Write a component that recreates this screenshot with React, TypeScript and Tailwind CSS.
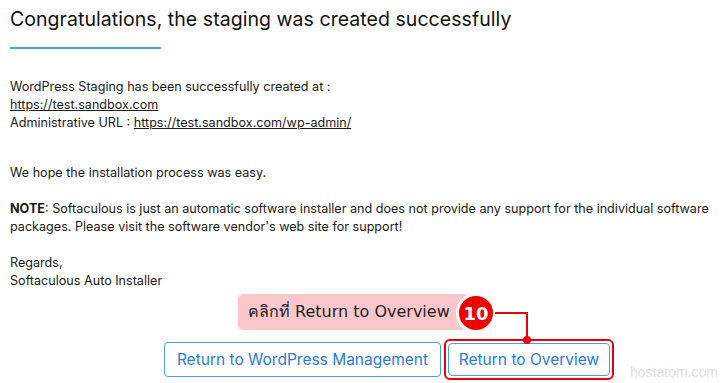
import React from "react";

export default function App() {
  return (
    <div
      className="relative w-[720px] h-[383px] overflow-hidden bg-white text-[#1a1a1a]"
      style={{ fontFamily: "Inter, 'Open Sans', sans-serif" }}
    >
      <div className="flex flex-col pl-[10px] pt-[6px]">
        <h1 className="text-[19.5px] leading-[26px] font-normal text-[#111] tracking-[0.05px]">
          Congratulations, the staging was created successfully
        </h1>
        <div className="mt-[15px] h-[2px] w-[151px] bg-[#4a9cf5]" />
        <div className="mt-[29px] text-[12.6px] leading-[18px]">
          <p>WordPress Staging has been successfully created at :</p>
          <p>
            <a className="underline text-[#1a1a1a]">https://test.sandbox.com</a>
          </p>
          <p>
            Administrative URL :{" "}
            <a className="underline text-[#1a1a1a]">https://test.sandbox.com/wp-admin/</a>
          </p>
          <p className="mt-[32px]">We hope the installation process was easy.</p>
          <p className="mt-[18px]">
            <b className="font-bold">NOTE</b>: Softaculous is just an automatic software installer and does not provide any support for the individual software packages. Please visit the software vendor's web site for support!
          </p>
          <p className="mt-[18px]">Regards,</p>
          <p>Softaculous Auto Installer</p>
        </div>
        <div className="mt-[49px] flex items-center gap-[3px] pl-[154px]">
          <button className="h-[35px] w-[277px] rounded-[4px] border border-[#4a9cf5] text-[#2a7ae2] text-[15.5px] bg-white">
            Return to WordPress Management
          </button>
          <div className="rounded-[6px] border-2 border-[#e8000b] p-[2px]">
            <button className="h-[33px] w-[162px] rounded-[4px] border border-[#4a9cf5] text-[#2a7ae2] text-[15.5px] bg-white">
              Return to Overview
            </button>
          </div>
        </div>
      </div>

      {/* annotation callout */}
      <div
        className="absolute left-[238px] top-[293px] flex items-start"
        style={{ fontFamily: "Tahoma, 'DejaVu Sans', 'Noto Sans', sans-serif" }}
      >
        <div className="mt-[1px] h-[36px] w-[230px] rounded-[5px] bg-[#fcc7cb] flex items-center pl-[10px] text-[16px] text-[#222]">
          คลิกที่ Return to Overview
        </div>
        <div className="-ml-[12px] w-[40px] h-[40px] rounded-full bg-[#ee0000] border-[3px] border-white flex items-center justify-center text-white font-bold text-[18px]">
          10
        </div>
        <svg width="40" height="52" viewBox="0 0 40 52" className="-ml-[1px]">
          <path d="M0 20 H32 V47" fill="none" stroke="#e8000b" strokeWidth="2" />
          <circle cx="32" cy="47" r="4" fill="#e8000b" />
        </svg>
      </div>

      <div
        className="absolute left-[630px] top-[362px] text-[14px] text-[#e0e0e0]"
        style={{ fontFamily: "'Liberation Sans', Arial, sans-serif" }}
      >
        hostatom.com
      </div>
    </div>
  );
}
